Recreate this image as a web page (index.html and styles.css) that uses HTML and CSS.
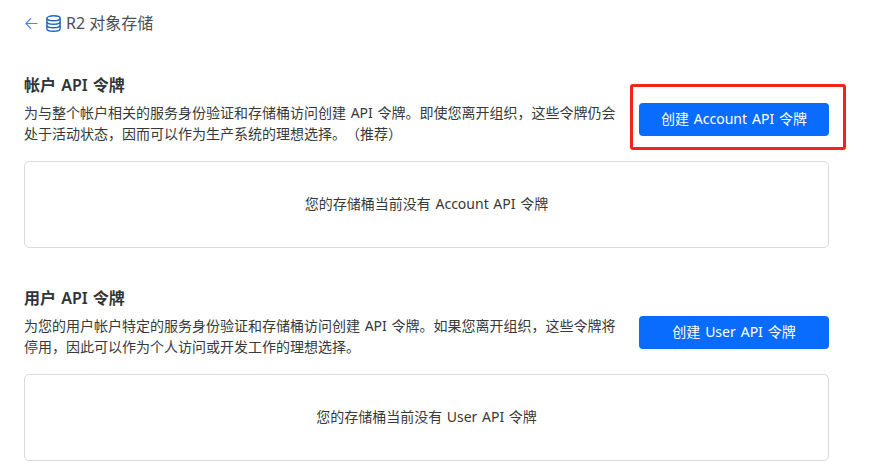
FILE: index.html
```html
<!DOCTYPE html>
<html lang="zh-CN">
<head>
    <meta charset="UTF-8">
    <title>R2 API 令牌</title>
    <link rel="stylesheet" href="styles.css">
</head>
<body>
    <div class="page">
        <a class="back-link" href="#">
            <svg class="back-arrow" width="13" height="13" viewBox="0 0 13 13" fill="none" stroke="#4a88dc" stroke-width="1.2">
                <path d="M12.500 6.500H1M6 1.200L.9 6.500 6 11.800"/>
            </svg>
            <svg class="bucket-icon" width="15" height="17" viewBox="0 0 15 17" fill="none" stroke="#1f66c4" stroke-width="1.4">
                <ellipse cx="7.500" cy="3.300" rx="6.600" ry="2.500"/>
                <path d="M.9 3.300v10.400c0 1.400 3 2.500 6.600 2.500s6.600-1.100 6.600-2.500V3.300"/>
                <path d="M.9 6.800c0 1.400 3 2.500 6.600 2.500s6.600-1.100 6.600-2.500"/>
                <path d="M.9 10.200c0 1.400 3 2.500 6.600 2.500s6.600-1.100 6.600-2.500"/>
            </svg>
            <span>R2 对象存储</span>
        </a>

        <section class="token-section">
            <div class="section-head">
                <div class="section-text">
                    <h2>帐户 API 令牌</h2>
                    <p>为与整个帐户相关的服务身份验证和存储桶访问创建 API 令牌。即使您离开组织，这些令牌仍会处于活动状态，因而可以作为生产系统的理想选择。（推荐）</p>
                </div>
                <div class="button-wrap">
                    <button type="button" class="create-button">创建 Account API 令牌</button>
                    <div class="highlight"></div>
                </div>
            </div>
            <div class="empty-box">您的存储桶当前没有 Account API 令牌</div>
        </section>

        <section class="token-section">
            <div class="section-head">
                <div class="section-text">
                    <h2>用户 API 令牌</h2>
                    <p>为您的用户帐户特定的服务身份验证和存储桶访问创建 API 令牌。如果您离开组织，这些令牌将停用，因此可以作为个人访问或开发工作的理想选择。</p>
                </div>
                <div class="button-wrap">
                    <button type="button" class="create-button">创建 User API 令牌</button>
                </div>
            </div>
            <div class="empty-box">您的存储桶当前没有 User API 令牌</div>
        </section>
    </div>
</body>
</html>
```

FILE: styles.css
```css
html, body {
    height: 100%;
}

body {
    margin: 0;
    background-color: #fff;
    color: #36393a;
    font-family: "Noto Sans", "Noto Sans CJK SC", sans-serif;
    font-size: 14px;
    line-height: 21px;
    word-spacing: 1px;
    text-spacing-trim: space-all;
    overflow: hidden;
}

.page {
    width: 805px;
    padding: 13px 0 0 24px;
}

.back-link {
    display: flex;
    align-items: center;
    height: 21px;
    color: #4b4f52;
    font-size: 16px;
    word-spacing: 0;
    text-decoration: none;
}

.back-arrow {
    margin: 0 8px 0 1px;
}

.bucket-icon {
    margin-right: 5px;
}

.token-section {
    margin-top: 39px;
}

.token-section + .token-section {
    margin-top: 38px;
}

.section-head {
    display: flex;
    justify-content: space-between;
    align-items: flex-start;
}

.section-text {
    width: 596px;
}

.section-text h2 {
    margin: 0 0 5px;
    font-size: 16px;
    line-height: 24px;
    font-weight: 600;
    color: #313436;
}

.section-text p {
    margin: 0;
}

.button-wrap {
    position: relative;
    margin-top: 30px;
}

.create-button {
    display: block;
    width: 190px;
    height: 33px;
    padding: 0 0 4px;
    border: none;
    border-radius: 4px;
    background-color: #0a6cff;
    color: #fff;
    font-family: inherit;
    font-size: 14px;
    word-spacing: 1.3px;
    cursor: pointer;
}

.highlight {
    position: absolute;
    top: -19px;
    left: -9px;
    width: 210px;
    height: 60px;
    border: 3px solid #f5231b;
    border-radius: 3px;
}

.empty-box {
    display: flex;
    justify-content: center;
    align-items: center;
    height: 83px;
    margin-top: 17px;
    padding-bottom: 2px;
    border: 1px solid #d9d9d9;
    border-radius: 5px;
}
```
